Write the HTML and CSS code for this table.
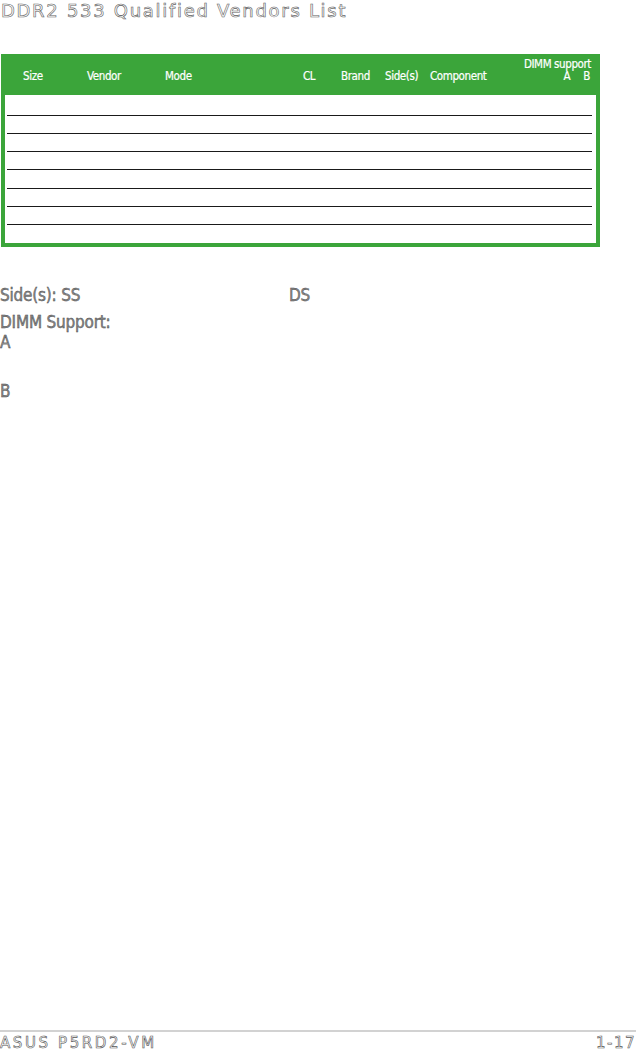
FILE: index.html
```html
<!DOCTYPE html>
<html lang="en">
<head>
    <meta charset="UTF-8">
    <meta name="viewport" content="width=device-width, initial-scale=1.0">
    <title>DDR2 533 Qualified Vendors List</title>
    <link rel="stylesheet" href="styles.css">
</head>
<body>
    <div class="page">
        <h2 class="title">DDR2 533 Qualified Vendors List</h2>

        <div class="qvl">
            <div class="qvl-head">
                <span>Size</span>
                <span>Vendor</span>
                <span>Mode</span>
                <span>CL</span>
                <span>Brand</span>
                <span>Side(s)</span>
                <span>Component</span>
                <span class="dimm">
                    <span>DIMM support</span>
                    <span class="slots"><span>A</span><span>B</span></span>
                </span>
            </div>
            <div class="qvl-body">
                <div class="row first"></div>
                <div class="row"></div>
                <div class="row"></div>
                <div class="row"></div>
                <div class="row tall"></div>
                <div class="row"></div>
                <div class="row"></div>
                <div class="row last"></div>
            </div>
        </div>

        <div class="notes">
            <p class="side"><span class="ss">Side(s): SS</span><span>DS</span></p>
            <p class="dimm-note">DIMM Support:</p>
            <p class="slot-a">A</p>
            <p class="slot-b">B</p>
        </div>
    </div>

    <footer>
        <span>ASUS P5RD2-VM</span>
        <span class="page-no">1-17</span>
    </footer>
</body>
</html>
```

FILE: styles.css
```css
body {
    margin: 0;
    padding: 0;
    font-family: 'Liberation Sans', Arial, sans-serif;
    background-color: #ffffff;
    color: #555555;
    height: 1052px;
    position: relative;
}
.page {
    height: 1030px;
}
.title {
    margin: 0;
    padding: 1px 0 0 1px;
    font-family: 'DejaVu Sans', sans-serif;
    font-size: 18px;
    font-weight: normal;
    letter-spacing: 1.7px;
    color: #ffffff;
    -webkit-text-stroke: 0.6px #5e5e5e;
    line-height: 20px;
}
.qvl {
    margin: 33px 0 0 1px;
    width: 599px;
    background-color: #3ba53a;
    padding: 0 4px 4px 4px;
    box-sizing: border-box;
}
.qvl-head {
    height: 41px;
    display: grid;
    grid-template-columns: 64px 78px 138px 38px 44px 45px 1fr auto;
    align-items: end;
    padding: 0 5px 13px 18px;
    box-sizing: border-box;
    font-family: 'DejaVu Sans Condensed', 'DejaVu Sans', sans-serif;
    font-size: 11.5px;
    letter-spacing: -0.4px;
    color: #ffffff;
    -webkit-text-stroke: 0.2px #ffffff;
    line-height: 12px;
}
.dimm {
    display: flex;
    flex-direction: column;
    align-items: flex-end;
}
.slots {
    display: flex;
    gap: 13px;
    padding-right: 1px;
}
.qvl-body {
    background-color: #ffffff;
    height: 148px;
}
.row {
    height: 17px;
    margin: 0 4px 0 2px;
    border-bottom: 1px solid #1a1a1a;
}
.row.first {
    height: 20px;
}
.row.tall {
    height: 18px;
}
.row.last {
    border-bottom: none;
}
.notes {
    margin-top: 38px;
    font-family: 'DejaVu Sans Condensed', 'DejaVu Sans', sans-serif;
    font-size: 17px;
    letter-spacing: -0.2px;
    color: #8a8a8a;
    -webkit-text-stroke: 0.4px #444444;
}
.notes p {
    margin: 0;
    line-height: 20px;
}
.notes .side {
    display: flex;
}
.notes .ss {
    width: 289px;
}
.notes .dimm-note {
    margin-top: 7px;
}
.notes .slot-b {
    margin-top: 29px;
}
footer {
    position: absolute;
    left: 0;
    right: 0;
    bottom: 0;
    height: 20px;
    border-top: 2px solid #d2d2d2;
    display: flex;
    justify-content: space-between;
    font-family: 'DejaVu Sans', sans-serif;
    font-size: 15px;
    letter-spacing: 2.6px;
    color: #ffffff;
    -webkit-text-stroke: 0.6px #555555;
    line-height: 22px;
}
footer .page-no {
    letter-spacing: 1.5px;
}
```
